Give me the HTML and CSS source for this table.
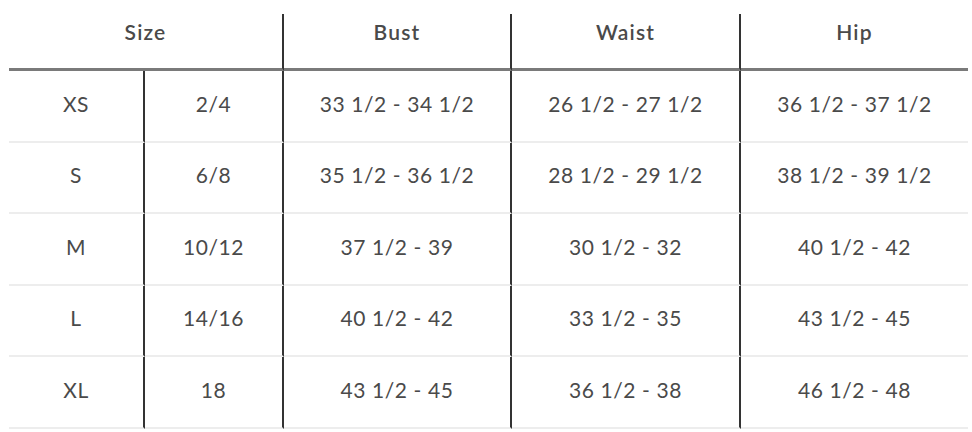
FILE: index.html
```html
<!DOCTYPE html>
<html lang="en">
<head>
<meta charset="utf-8">
<title>Size chart</title>
<link rel="stylesheet" href="styles.css">
</head>
<body>
<table class="size-chart">
  <colgroup>
    <col class="c1"><col class="c2"><col class="c3"><col class="c4"><col class="c5">
  </colgroup>
  <thead>
    <tr>
      <th colspan="2" class="sep">Size</th>
      <th class="sep">Bust</th>
      <th class="sep">Waist</th>
      <th>Hip</th>
    </tr>
  </thead>
  <tbody>
    <tr><td class="sep">XS</td><td class="sep">2/4</td><td class="sep">33 1/2 - 34 1/2</td><td class="sep">26 1/2 - 27 1/2</td><td>36 1/2 - 37 1/2</td></tr>
    <tr><td class="sep">S</td><td class="sep">6/8</td><td class="sep">35 1/2 - 36 1/2</td><td class="sep">28 1/2 - 29 1/2</td><td>38 1/2 - 39 1/2</td></tr>
    <tr><td class="sep">M</td><td class="sep">10/12</td><td class="sep">37 1/2 - 39</td><td class="sep">30 1/2 - 32</td><td>40 1/2 - 42</td></tr>
    <tr><td class="sep">L</td><td class="sep">14/16</td><td class="sep">40 1/2 - 42</td><td class="sep">33 1/2 - 35</td><td>43 1/2 - 45</td></tr>
    <tr><td class="sep">XL</td><td class="sep">18</td><td class="sep">43 1/2 - 45</td><td class="sep">36 1/2 - 38</td><td>46 1/2 - 48</td></tr>
  </tbody>
</table>
</body>
</html>
```

FILE: styles.css
```css
html, body {
  margin: 0;
  padding: 0;
  background: #ffffff;
}

body {
  font-family: "Lato", "Liberation Sans", sans-serif;
  color: #4a4a4a;
}

.size-chart {
  margin: 14px 0 0 9px;
  border-collapse: separate;
  border-spacing: 0;
  table-layout: fixed;
  width: 959px;
}

.c1 { width: 136px; }
.c2 { width: 139px; }
.c3 { width: 228px; }
.c4 { width: 229px; }
.c5 { width: 227px; }

.size-chart th,
.size-chart td {
  text-align: center;
  padding: 0;
  font-size: 21px;
  line-height: 26px;
  letter-spacing: 0.6px;
}

.size-chart th {
  font-weight: 600;
  font-size: 21px;
  letter-spacing: 1.2px;
  height: 57px;
  vertical-align: top;
  padding-top: 5px;
  box-sizing: border-box;
  border-bottom: 3px solid #7a7a7a;
}

.size-chart td {
  height: 71.5px;
  box-sizing: border-box;
  vertical-align: middle;
  padding-bottom: 4px;
  border-bottom: 2px solid #ededed;
}

.size-chart .sep {
  border-right: 2px solid #333333;
}
```
